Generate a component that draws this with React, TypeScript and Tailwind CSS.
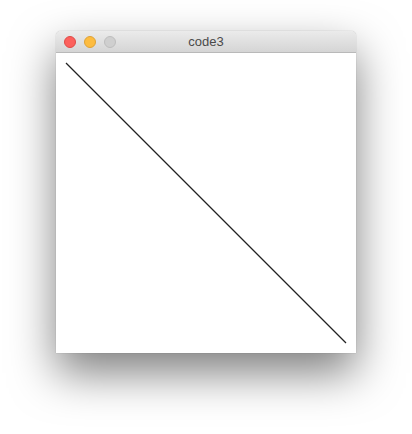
export default function App() {
  return (
    <div className="w-[412px] h-[434px] bg-white pt-[31px] pl-[56px] font-['Helvetica_Neue','Liberation_Sans',Arial,sans-serif]">
      <div className="w-[300px] rounded-t-[5px] shadow-[0_20px_45px_rgba(0,0,0,0.5),0_0_1px_rgba(0,0,0,0.4)] overflow-hidden">
        {/* title bar */}
        <div className="relative h-[22px] flex items-center bg-gradient-to-b from-[#ebebeb] to-[#d5d5d5] border-b border-[#b9b9b9]">
          <div className="flex items-center gap-2 pl-2">
            <span className="w-3 h-3 rounded-full bg-[#fc605c] border border-[#de4a46]" />
            <span className="w-3 h-3 rounded-full bg-[#fdbc40] border border-[#dea236]" />
            <span className="w-3 h-3 rounded-full bg-[#cfcfcf] border border-[#bdbdbd]" />
          </div>
          <div className="absolute inset-0 flex items-center justify-center text-[13px] text-[#4a4a4a]">
            code3
          </div>
        </div>
        {/* canvas */}
        <div className="w-[300px] h-[300px] bg-white">
          <svg width="300" height="300" viewBox="0 0 300 300">
            <line x1="10" y1="10" x2="290" y2="290" stroke="#222" strokeWidth="1.2" />
          </svg>
        </div>
      </div>
    </div>
  );
}
